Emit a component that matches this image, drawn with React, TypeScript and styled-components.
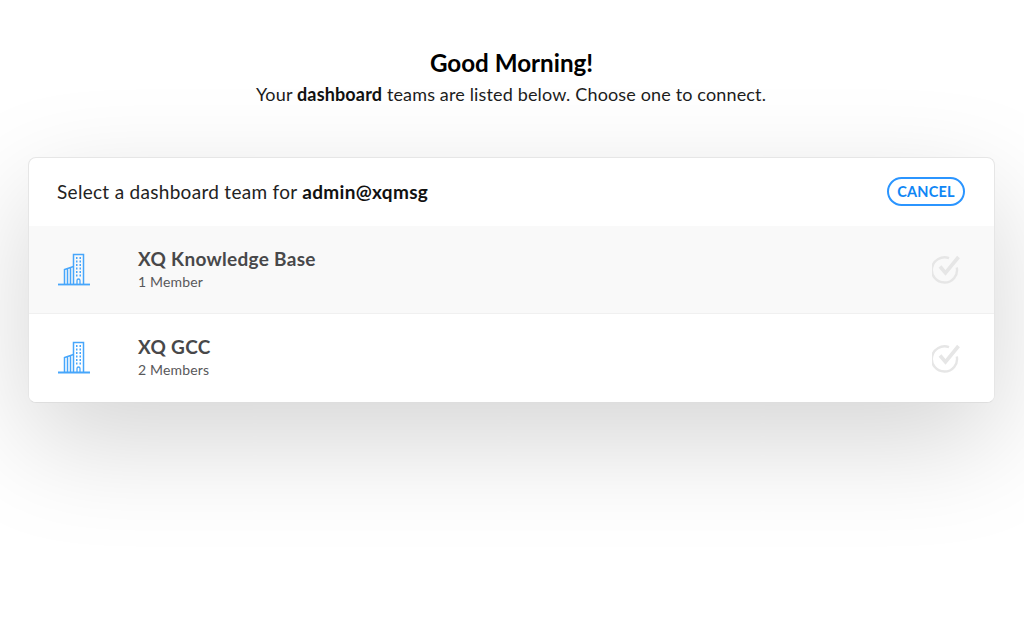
import React from "react";
import styled, { createGlobalStyle } from "styled-components";

const Global = createGlobalStyle`
  html, body { margin: 0; padding: 0; background: #fff; }
  body { font-family: "Lato", "Liberation Sans", sans-serif; color: #000; overflow: hidden; }
`;

const Page = styled.main`
  width: 1024px;
  height: 623px;
  padding: 48px 28px 0 28px;
  box-sizing: border-box;
  overflow: hidden;
`;

const Intro = styled.header`
  text-align: center;
  height: 109px;
`;

const Title = styled.h1`
  margin: 0;
  font-size: 24.2px;
  line-height: 30px;
  font-weight: 700;
  color: #000;
  padding-right: 1px;
`;

const Subtitle = styled.p`
  margin: 2px 0 0;
  padding-right: 2px;
  font-size: 18px;
  line-height: 28px;
  letter-spacing: 0.15px;
  color: #1c1c1c;
  b { font-weight: 700; color: #111; }
`;

const Card = styled.section`
  width: 967px;
  height: 246px;
  box-sizing: border-box;
  background: #fff;
  border: 1px solid #e6e6e6;
  border-bottom-color: #dedede;
  border-radius: 8px;
  box-shadow: 0 38px 110px rgba(0, 0, 0, 0.17);
  overflow: hidden;
`;

const CardHeader = styled.div`
  height: 68px;
  box-sizing: border-box;
  padding: 0 29px 2px 28px;
  display: flex;
  align-items: center;
  justify-content: space-between;
`;

const CardTitle = styled.h2`
  margin: 0;
  font-size: 19px;
  font-weight: 400;
  letter-spacing: 0.3px;
  color: #222;
  b { font-weight: 700; color: #111; }
`;

const CancelButton = styled.button`
  width: 78px;
  height: 29px;
  padding: 0;
  border: 2px solid #2b95ff;
  border-radius: 15px;
  background: #fff;
  color: #0f86f5;
  font-family: inherit;
  font-size: 14.5px;
  font-weight: 700;
  letter-spacing: 0.2px;
`;

const Row = styled.div<{ $shaded?: boolean }>`
  height: 88px;
  box-sizing: border-box;
  padding: 0 32px 0 29px;
  display: flex;
  align-items: center;
  background: ${(p) => (p.$shaded ? "#f9f9f9" : "#fff")};
  border-bottom: ${(p) => (p.$shaded ? "1px solid #f0f0f0" : "none")};
`;

const IconSlot = styled.div`
  width: 80px;
  flex: none;
  display: flex;
  align-items: center;
`;

const TeamInfo = styled.div`
  flex: 1;
  margin-top: -2px;
`;

const TeamName = styled.div`
  font-size: 19px;
  line-height: 24px;
  font-weight: 700;
  letter-spacing: 0.3px;
  color: #48484a;
`;

const TeamMeta = styled.div`
  margin-top: 2px;
  font-size: 14px;
  line-height: 18px;
  letter-spacing: 0.15px;
  color: #58585a;
`;

const CheckSlot = styled.div`
  display: flex;
  margin-top: -1px;
`;

const Building = () => (
  <svg width="33" height="34" viewBox="0 0 33 34" fill="none" stroke="#47a6fb">
    <path d="M0 31.5H32" strokeWidth="1.8" />
    <path d="M15.5 31V1.5H25.5V31" strokeWidth="1.5" />
    <path d="M6.5 31V16.5L15.5 13.5M9.5 31V15.5M12.5 31V14.5" strokeWidth="1.5" />
    <path d="M19 31V27.5A1.5 1.5 0 0 1 22 27.5V31" strokeWidth="1.3" />
    <path
      d="M18 5H19.5M21.5 5H23M18 8.5H19.5M21.5 8.5H23M18 12H19.5M21.5 12H23M18 15.5H19.5M21.5 15.5H23M18 19H19.5M21.5 19H23M18 22.5H19.5M21.5 22.5H23"
      strokeWidth="1.8"
    />
  </svg>
);

const Check = () => (
  <svg width="30" height="30" viewBox="0 0 30 30" fill="none" stroke="#e6e6e6" strokeWidth="2.4">
    <path d="M24.8 13.5A12.6 12.6 0 1 1 17 4.2" />
    <path d="M8 12.5L13.5 19L26.5 3" strokeWidth="3.6" />
  </svg>
);

const TeamRow = ({ name, meta, shaded }: { name: string; meta: string; shaded?: boolean }) => (
  <Row $shaded={shaded}>
    <IconSlot><Building /></IconSlot>
    <TeamInfo>
      <TeamName>{name}</TeamName>
      <TeamMeta>{meta}</TeamMeta>
    </TeamInfo>
    <CheckSlot><Check /></CheckSlot>
  </Row>
);

export default function App() {
  return (
    <Page>
      <Global />
      <Intro>
        <Title>Good Morning!</Title>
        <Subtitle>Your <b>dashboard</b> teams are listed below. Choose one to connect.</Subtitle>
      </Intro>
      <Card>
        <CardHeader>
          <CardTitle>Select a dashboard team for <b>admin@xqmsg</b></CardTitle>
          <CancelButton>CANCEL</CancelButton>
        </CardHeader>
        <TeamRow name="XQ Knowledge Base" meta="1 Member" shaded />
        <TeamRow name="XQ GCC" meta="2 Members" />
      </Card>
    </Page>
  );
}
